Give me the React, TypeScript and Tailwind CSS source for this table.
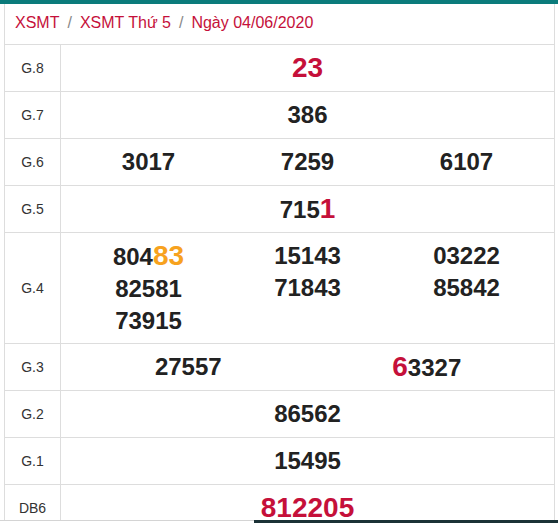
import type { ReactNode } from 'react';

const RED = 'text-[#c5103a]';

function Row({ label, h = 'h-[47px]', children }: { label: string; h?: string; children: ReactNode }) {
  return (
    <div className={`flex ${h} border-b border-[#dddddd]`}>
      <div className="w-[56px] shrink-0 border-r border-[#dddddd] flex items-center justify-center text-[14px] text-[#333333]">
        {label}
      </div>
      <div className="flex-1 px-[8px] flex items-center">{children}</div>
    </div>
  );
}

function Num({ children, red }: { children: ReactNode; red?: boolean }) {
  return (
    <span className={`font-bold ${red ? `${RED} text-[28px]` : 'text-[#222222] text-[24px]'} leading-[32px]`}>
      {children}
    </span>
  );
}

function Hi({ children, color }: { children: ReactNode; color: 'red' | 'orange' }) {
  return (
    <span className={`text-[28px] ${color === 'red' ? RED : 'text-[#f7a21e]'}`}>{children}</span>
  );
}

function Cols({ n, children }: { n: 2 | 3; children: ReactNode }) {
  return (
    <div className={`w-full grid ${n === 3 ? 'grid-cols-3' : 'grid-cols-2'} text-center`}>{children}</div>
  );
}

export default function App() {
  return (
    <div
      className="relative w-[558px] h-[523px] overflow-hidden bg-white"
      style={{ fontFamily: '"Liberation Sans", Arial, sans-serif' }}
    >
      <div className="h-[4px] bg-[#0b7b7b]" />
      <div className="ml-[4px] w-[551px] border-x border-[#dddddd]">
        <div className="h-[41px] border-b border-[#dddddd] flex items-center pl-[10px] pb-[3px] text-[16px] text-[#c5103a]">
          <span>XSMT</span>
          <span className="px-[8px] text-[#888888]">/</span>
          <span>XSMT Thứ 5</span>
          <span className="px-[8px] text-[#888888]">/</span>
          <span>Ngày 04/06/2020</span>
        </div>

        <Row label="G.8">
          <div className="w-full text-center">
            <Num red>23</Num>
          </div>
        </Row>
        <Row label="G.7">
          <div className="w-full text-center">
            <Num>386</Num>
          </div>
        </Row>
        <Row label="G.6">
          <Cols n={3}>
            <Num>3017</Num>
            <Num>7259</Num>
            <Num>6107</Num>
          </Cols>
        </Row>
        <Row label="G.5">
          <div className="w-full text-center">
            <Num>
              715<Hi color="red">1</Hi>
            </Num>
          </div>
        </Row>
        <Row label="G.4" h="h-[111px]">
          <div className="w-full grid grid-cols-3 text-center">
            <div className="flex flex-col">
              <Num>
                804<Hi color="orange">83</Hi>
              </Num>
              <Num>82581</Num>
              <Num>73915</Num>
            </div>
            <div className="flex flex-col">
              <Num>15143</Num>
              <Num>71843</Num>
            </div>
            <div className="flex flex-col">
              <Num>03222</Num>
              <Num>85842</Num>
            </div>
          </div>
        </Row>
        <Row label="G.3">
          <Cols n={2}>
            <Num>27557</Num>
            <Num>
              <Hi color="red">6</Hi>3327
            </Num>
          </Cols>
        </Row>
        <Row label="G.2">
          <div className="w-full text-center">
            <Num>86562</Num>
          </div>
        </Row>
        <Row label="G.1">
          <div className="w-full text-center">
            <Num>15495</Num>
          </div>
        </Row>
        <Row label="DB6">
          <div className="w-full text-center">
            <Num red>812205</Num>
          </div>
        </Row>
      </div>

      <div className="absolute left-0 top-[520px] w-full h-[3px] flex">
        <div className="w-[254px] border-t border-[#d4d4d4] bg-white" />
        <div className="flex-1 bg-[#1b3236]" />
      </div>
    </div>
  );
}
